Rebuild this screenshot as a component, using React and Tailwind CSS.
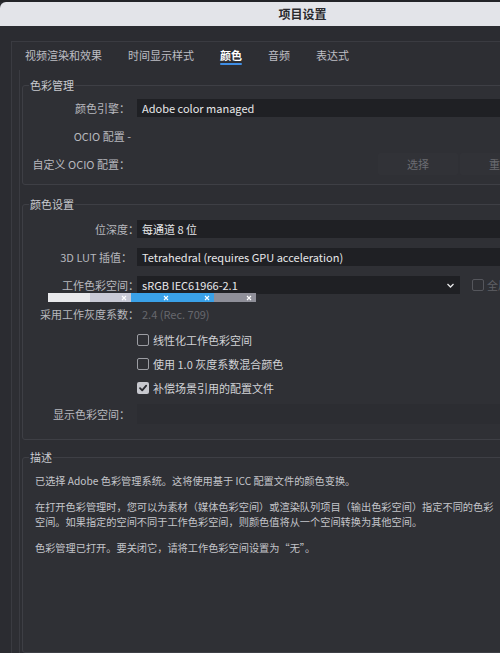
import React from "react";

function Box({ checked, dim }) {
  if (checked) {
    return (
      <span className="w-[12px] h-[12px] shrink-0 rounded-[2px] bg-[#c7c8ce] flex items-center justify-center">
        <svg width="10" height="10" viewBox="0 0 10 10">
          <polyline points="2,5.2 4.2,7.4 8.2,2.6" fill="none" stroke="#2b2c31" strokeWidth="1.8" strokeLinecap="round" strokeLinejoin="round" />
        </svg>
      </span>
    );
  }
  return (
    <span
      className={
        dim
          ? "w-[12px] h-[12px] shrink-0 rounded-[2px] border-[1.5px] border-[#55565c]"
          : "w-[12px] h-[12px] shrink-0 rounded-[2px] border-[1.5px] border-[#9c9da3]"
      }
    />
  );
}

function Row({ label, mr, children, h }) {
  return (
    <div className={`flex items-center ${h || "h-[28px]"}`}>
      <div className="w-[114px] shrink-0 flex justify-end whitespace-nowrap text-[#b7b8be]">
        <span className={mr}>{label}</span>
      </div>
      {children}
    </div>
  );
}

function Drop({ children, w }) {
  return (
    <div className={`${w || "flex-1"} h-[18px] bg-[#1f2024] text-[#e8e8ea] pl-[5px] flex items-center whitespace-nowrap`}>
      {children}
    </div>
  );
}

export default function App() {
  const X = () => (
    <svg width="6" height="6" viewBox="0 0 6 6" className="absolute right-[4px] top-[1.5px]">
      <path d="M1 1 L5 5 M5 1 L1 5" stroke="#ffffff" strokeWidth="1.1" />
    </svg>
  );
  return (
    <div className="w-[500px] h-[653px] overflow-hidden bg-[#2b2c31] font-['Noto_Sans_CJK_SC',sans-serif] text-[11px] leading-[16px] flex flex-col">
      <div className="h-[2px] bg-[#232428] shrink-0" />
      <div className="h-[24px] shrink-0 bg-[#e3e4e9] rounded-tl-[6px] flex items-center justify-center pl-[105px] text-[12px] font-bold text-[#2a2a2e]">
        项目设置
      </div>

      <div className="mt-[15px] ml-[11px] w-[560px] flex-1 border-l border-t border-[#3a3b41] bg-[#2d2e33] flex flex-col">
        <div className="flex pl-[13px] gap-[26px] h-[28px] shrink-0 text-[11px]">
          {["视频渲染和效果", "时间显示样式", "颜色", "音频", "表达式"].map((t) => (
            <div key={t} className="flex flex-col pt-[5px]">
              <span className={t === "颜色" ? "leading-[16px] text-white font-bold" : "leading-[16px] text-[#bdbec4]"}>{t}</span>
              <span className={t === "颜色" ? "h-[2px] bg-[#3f8ee6] rounded-full" : "h-[2px]"} />
            </div>
          ))}
        </div>

        <div className="ml-[7px] w-[540px] flex-1 border-l border-[#3a3b41] pt-[7px] flex flex-col">
          <fieldset className="ml-[2px] border border-[#3e3f45] rounded-[3px] pt-[1px] pb-[6px] bg-[#2f3035]">
            <legend className="ml-[6px] px-[1px] text-[#c9cacf] leading-[16px]">色彩管理</legend>
            <Row label="颜色引擎：" mr="mr-[7px]">
              <Drop>Adobe color managed</Drop>
            </Row>
            <Row label="OCIO 配置 -" mr="mr-[6px]">
              <div className="flex-1" />
            </Row>
            <Row label="自定义 OCIO 配置：" mr="mr-[7px]">
              <div className="flex-1 flex items-center gap-[2px] pl-[241px]">
                <div className="w-[80px] h-[22px] shrink-0 bg-[#313237] rounded-[2px] flex items-center justify-center text-[#6b6c72]">选择</div>
                <div className="w-[80px] h-[22px] shrink-0 bg-[#313237] rounded-[2px] flex items-center justify-center text-[#6b6c72]">重置</div>
              </div>
            </Row>
          </fieldset>

          <fieldset className="mt-[11px] ml-[2px] border border-[#3e3f45] rounded-[3px] pt-[3px] pb-[11px] bg-[#2f3035]">
            <legend className="ml-[6px] px-[1px] text-[#c9cacf] leading-[16px]">颜色设置</legend>
            <Row label="位深度：" mr="mr-[-2px]">
              <Drop>每通道 8 位</Drop>
            </Row>
            <Row label="3D LUT 插值：" mr="mr-[5px]">
              <Drop>Tetrahedral (requires GPU acceleration)</Drop>
            </Row>
            <div className="relative">
              <Row label="工作色彩空间：" mr="mr-[-2px]">
                <div className="w-[323px] h-[18px] bg-[#1f2024] text-[#e8e8ea] pl-[5px] pr-[5px] flex items-center justify-between whitespace-nowrap">
                  <span>sRGB IEC61966-2.1</span>
                  <svg width="9" height="9" viewBox="0 0 9 9">
                    <polyline points="1.5,3 4.5,6 7.5,3" fill="none" stroke="#e8e8ea" strokeWidth="1.3" />
                  </svg>
                </div>
                <div className="ml-[12px] flex items-center gap-[3px] text-[#5f6066]">
                  <Box dim />
                  <span>全局</span>
                </div>
              </Row>
              <div className="absolute left-[25px] top-[22px] w-[208px] h-[9px] grid grid-cols-5">
                <div className="bg-[#e9e9ec]" />
                <div className="bg-[#c9cad6] relative"><X /></div>
                <div className="bg-[#3aa1e8] relative"><X /></div>
                <div className="bg-[#3aa1e8] relative"><X /></div>
                <div className="bg-[#8f8f99] relative"><X /></div>
              </div>
            </div>
            <div className="mt-[1px]">
              <Row label="采用工作灰度系数：" mr="mr-[-2px]">
                <span className="pl-[5px] text-[#67686e]">2.4 (Rec. 709)</span>
              </Row>
            </div>
            <div className="flex flex-col pl-[114px]">
              {[
                ["线性化工作色彩空间", false],
                ["使用 1.0 灰度系数混合颜色", false],
                ["补偿场景引用的配置文件", true],
              ].map(([t, c]) => (
                <div key={t} className="h-[24px] flex items-center gap-[4px] text-[#d2d3d7]">
                  <Box checked={c} />
                  <span>{t}</span>
                </div>
              ))}
            </div>
            <Row label="显示色彩空间：" mr="mr-[7px]">
              <div className="flex-1 h-[20px] bg-[#2c2d32]" />
            </Row>
          </fieldset>

          <fieldset className="mt-[9px] ml-[2px] flex-1 border border-[#3e3f45] rounded-[3px] bg-[#2f3035]">
            <legend className="ml-[6px] px-[1px] text-[#c9cacf] leading-[16px]">描述</legend>
            <div className="pl-[12px] pt-[8px] text-[10.2px] leading-[15px] text-[#c4c5ca] whitespace-nowrap flex flex-col gap-[11px]">
              <p>已选择 Adobe 色彩管理系统。这将使用基于 ICC 配置文件的颜色变换。</p>
              <p>
                在打开色彩管理时，您可以为素材（媒体色彩空间）或渲染队列项目（输出色彩空间）指定不同的色彩
                <br />
                空间。如果指定的空间不同于工作色彩空间，则颜色值将从一个空间转换为其他空间。
              </p>
              <p>色彩管理已打开。要关闭它，请将工作色彩空间设置为“无”。</p>
            </div>
          </fieldset>
        </div>
      </div>
    </div>
  );
}
